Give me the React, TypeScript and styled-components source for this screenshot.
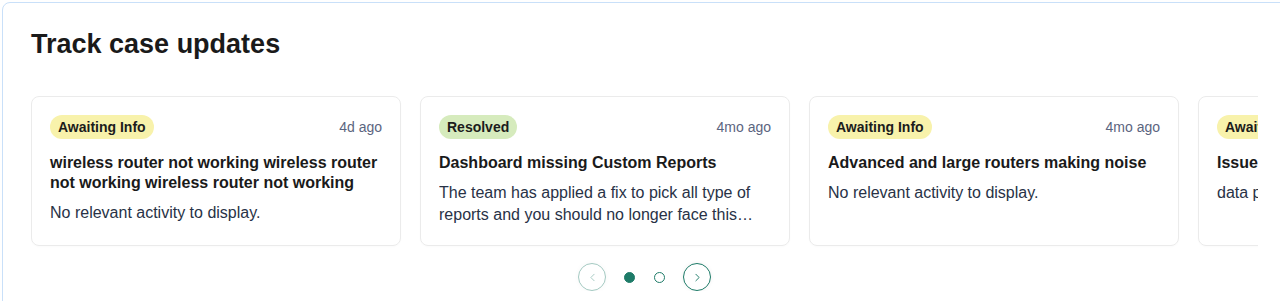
import React from "react";
import styled, { createGlobalStyle } from "styled-components";
import { ChevronLeft, ChevronRight } from "lucide-react";

const Global = createGlobalStyle`
  html, body { margin: 0; padding: 0; background: #ffffff; overflow: hidden; }
  body { font-family: "Liberation Sans", Arial, Helvetica, sans-serif; }
  * { box-sizing: border-box; }
`;

const Panel = styled.section`
  margin: 2px 0 0 2px;
  width: 1290px;
  min-height: 330px;
  border: 1px solid #c9e0f9;
  border-radius: 8px;
  padding: 25px 31px 24px 28px;
  background: #fff;
`;

const Title = styled.h2`
  margin: 0 0 36px 0;
  font-size: 27px;
  line-height: 32px;
  font-weight: 700;
  color: #1a1a1a;
`;

const Viewport = styled.div`
  width: 1227px;
  overflow: hidden;
`;

const Track = styled.div`
  display: flex;
  gap: 19px;
  width: max-content;
`;

const Card = styled.article`
  width: 370px;
  height: 150px;
  flex: none;
  border: 1px solid #ebebeb;
  border-radius: 8px;
  padding: 18px;
  display: flex;
  flex-direction: column;
  box-shadow: 0 1px 2px rgba(0, 0, 0, 0.02);
`;

const TopRow = styled.div`
  display: flex;
  align-items: center;
  justify-content: space-between;
  height: 24px;
`;

const Badge = styled.span<{ $tone: "wait" | "ok" }>`
  display: inline-flex;
  align-items: center;
  height: 24px;
  padding: 0 8px;
  border-radius: 12px;
  font-size: 14px;
  font-weight: 700;
  color: #1c1c1c;
  background: ${(p) => (p.$tone === "ok" ? "#d6ebbd" : "#f8f2ab")};
  white-space: nowrap;
`;

const Time = styled.span`
  font-size: 14px;
  color: #5b6580;
  white-space: nowrap;
`;

const CardTitle = styled.h3`
  margin: 14px 0 0 0;
  font-size: 16px;
  line-height: 20px;
  font-weight: 700;
  color: #1a1a1a;
`;

const Body = styled.p`
  margin: 9px 0 0 0;
  font-size: 16px;
  line-height: 22px;
  color: #283246;
  display: -webkit-box;
  -webkit-line-clamp: 2;
  -webkit-box-orient: vertical;
  overflow: hidden;
`;

const Pager = styled.div`
  display: flex;
  align-items: center;
  justify-content: center;
  gap: 18px;
  margin-top: 17px;
`;

const NavButton = styled.button<{ $disabled?: boolean }>`
  width: 28px;
  height: 28px;
  padding: 0;
  border-radius: 50%;
  border: 1.5px solid #1e7b68;
  background: #fff;
  color: #1e7b68;
  display: flex;
  align-items: center;
  justify-content: center;
  box-shadow: 0 0 4px rgba(0, 0, 0, 0.06);
  opacity: ${(p) => (p.$disabled ? 0.4 : 1)};
  cursor: pointer;
`;

const Dot = styled.span<{ $active?: boolean }>`
  width: 11px;
  height: 11px;
  border-radius: 50%;
  border: 1.5px solid #1e7b68;
  background: ${(p) => (p.$active ? "#1e7b68" : "#fff")};
  margin-left: ${(p) => (p.$active ? "0" : "1px")};
`;

type Item = {
  status: string;
  tone: "wait" | "ok";
  time: string;
  title: string;
  body: string;
};

const items: Item[] = [
  {
    status: "Awaiting Info",
    tone: "wait",
    time: "4d ago",
    title: "wireless router not working wireless router not working wireless router not working",
    body: "No relevant activity to display.",
  },
  {
    status: "Resolved",
    tone: "ok",
    time: "4mo ago",
    title: "Dashboard missing Custom Reports",
    body: "The team has applied a fix to pick all type of reports and you should no longer face this issue going forward.",
  },
  {
    status: "Awaiting Info",
    tone: "wait",
    time: "4mo ago",
    title: "Advanced and large routers making noise",
    body: "No relevant activity to display.",
  },
  {
    status: "Awaiting Info",
    tone: "wait",
    time: "5mo ago",
    title: "Issue with exporting reports",
    body: "data pipeline is being reviewed by our team.",
  },
];

export default function App() {
  return (
    <>
      <Global />
      <Panel>
        <Title>Track case updates</Title>
        <Viewport>
          <Track>
            {items.map((it, i) => (
              <Card key={i}>
                <TopRow>
                  <Badge $tone={it.tone}>{it.status}</Badge>
                  <Time>{it.time}</Time>
                </TopRow>
                <CardTitle>{it.title}</CardTitle>
                <Body>{it.body}</Body>
              </Card>
            ))}
          </Track>
          <Pager>
            <NavButton $disabled aria-label="Previous">
              <ChevronLeft size={13} strokeWidth={1.75} />
            </NavButton>
            <Dot $active />
            <Dot />
            <NavButton aria-label="Next">
              <ChevronRight size={13} strokeWidth={1.75} />
            </NavButton>
          </Pager>
        </Viewport>
      </Panel>
    </>
  );
}
